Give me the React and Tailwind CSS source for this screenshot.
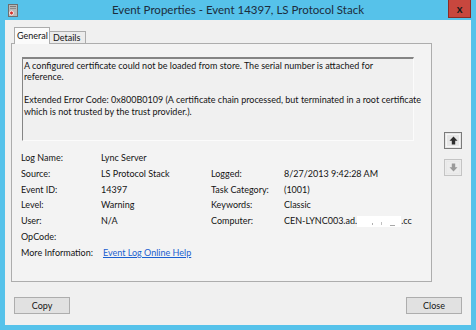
import React from 'react';

const font = { fontFamily: 'Lato, "Noto Sans", sans-serif' };

// small gray event-viewer document icon with a red mark
const WindowIcon = () => (
  <svg width="10" height="13" viewBox="0 0 10 13">
    <rect x="0.5" y="0.5" width="9" height="12" fill="#b8b8b8" stroke="#6e6e6e" />
    <rect x="2" y="2" width="6" height="1" fill="#7a7a7a" />
    <rect x="2" y="4" width="6" height="1" fill="#8a8a8a" />
    <circle cx="3.5" cy="9" r="2" fill="#d6312b" stroke="#fff" strokeWidth="0.8" />
  </svg>
);

const ArrowButton = ({ dir, disabled }) => (
  <div
    className={`w-[18px] h-[17px] border flex items-center justify-center ${
      disabled ? 'border-[#c4c4c4] bg-[#ececec]' : 'border-[#7a7a7a] bg-[#e6e6e6]'
    }`}
  >
    <div className={`w-[14px] h-[13px] border flex items-center justify-center ${disabled ? 'border-[#e8e8e8]' : 'border-[#f6f6f6]'}`}>
      <svg width="9" height="9" viewBox="0 0 9 9">
        <path
          d={dir === 'up' ? 'M4.5 0.5 L8.5 4.8 L6.2 4.8 L6.2 8.5 L2.8 8.5 L2.8 4.8 L0.5 4.8 Z' : 'M4.5 8.5 L8.5 4.2 L6.2 4.2 L6.2 0.5 L2.8 0.5 L2.8 4.2 L0.5 4.2 Z'}
          fill={disabled ? '#9a9a9a' : '#2d2d2d'}
        />
      </svg>
    </div>
  </div>
);

const fields = [
  ['Log Name:', 'Lync Server', '', ''],
  ['Source:', 'LS Protocol Stack', 'Logged:', '8/27/2013 9:42:28 AM'],
  ['Event ID:', '14397', 'Task Category:', '(1001)'],
  ['Level:', 'Warning', 'Keywords:', 'Classic'],
  ['User:', 'N/A', 'Computer:', 'computer'],
  ['OpCode:', '', '', ''],
];

export default function App() {
  return (
    <div className="w-[476px] h-[330px] bg-[#56c2ea] flex flex-col overflow-hidden" style={font}>
      {/* title bar */}
      <div className="h-[20px] shrink-0 grid grid-cols-[40px_1fr_40px] items-start">
        <div className="pl-[8px] pt-[4px]">
          <WindowIcon />
        </div>
        <div className="text-center text-[11.5px] leading-[20px] text-[#1c2c3c] whitespace-nowrap">
          Event Properties - Event 14397, LS Protocol Stack
        </div>
        <div className="flex justify-end pr-[5px]">
          <div className="w-[23px] h-[18px] bg-[#c8473e] border border-t-0 border-[#8b2c25] flex items-center justify-center text-[11px] font-bold text-[#1a1a1a] leading-none">
            x
          </div>
        </div>
      </div>

      {/* client area */}
      <div className="flex-1 mx-[5px] mb-[5px] bg-[#f0f0f0] pl-[6px] pr-[9px] pt-[7px] text-[9px] text-[#141414]">
        <div className="flex items-start">
          <div className="w-[421px] flex flex-col">
            {/* tabs */}
            <div className="h-[16px] flex items-end pl-[3px]">
              <div className="relative z-10 -mb-px w-[36px] h-[17px] bg-[#fbfbfb] border border-b-0 border-[#acacac] pl-[2px] leading-[15px]">
                General
              </div>
              <div className="w-[36px] h-[12px] bg-[#ececec] border border-l-0 border-b-0 border-[#acacac] pl-[3px] leading-[12px]">
                Details
              </div>
            </div>

            {/* panel */}
            <div className="h-[239px] border border-[#adadad] bg-[#f3f3f3] pl-[9px] pt-[13px]">
              <div className="ml-[1px] w-[392px] h-[84px] border-t-2 border-l border-[#858585] border-r border-b border-r-[#fbfbfb] border-b-[#fbfbfb] bg-[#f0f0f0] pl-[1px] pt-[0.5px] leading-[11.5px]">
                <div className="whitespace-nowrap">A configured certificate could not be loaded from store. The serial number is attached for</div>
                <div>reference.</div>
                <div className="h-[11.5px]" />
                <div className="whitespace-nowrap">Extended Error Code: 0x800B0109 (A certificate chain processed, but terminated in a root certificate</div>
                <div>which is not trusted by the trust provider.).</div>
              </div>

              <div className="mt-[9px] grid grid-cols-[80px_110px_73px_1fr] leading-[15.8px]">
                {fields.map(([l1, v1, l2, v2]) => (
                  <React.Fragment key={l1}>
                    <div>{l1}</div>
                    <div>{v1}</div>
                    <div>{l2}</div>
                    <div className="whitespace-nowrap">
                      {v2 === 'computer' ? (
                        <span className="inline-flex items-center">
                          CEN-LYNC003.ad.
                          <span className="relative inline-block w-[44px] h-[11px] bg-white">
                            <span className="absolute left-[15px] top-[7px] w-[1px] h-[2px] bg-[#b0b0b0]" />
                            <span className="absolute left-[24px] top-[6px] w-[1px] h-[3px] bg-[#c0c0c0]" />
                            <span className="absolute left-[33px] top-[9px] w-[5px] h-[1px] bg-[#a8a8a8]" />
                          </span>
                          .cc
                        </span>
                      ) : (
                        v2
                      )}
                    </div>
                  </React.Fragment>
                ))}
                <div className="whitespace-nowrap">More Information:</div>
                <div className="col-span-3">
                  <span className="ml-[2px] text-[#1a5fd0] underline underline-offset-1">Event Log Online Help</span>
                </div>
              </div>
            </div>
          </div>

          {/* navigation arrows */}
          <div className="ml-[12px] pt-[105px] flex flex-col gap-[10px]">
            <ArrowButton dir="up" />
            <ArrowButton dir="down" disabled />
          </div>
        </div>

        {/* bottom buttons */}
        <div className="mt-[15px] flex justify-between pl-[3px]">
          <div className="w-[56px] h-[17px] bg-[#e1e1e1] border border-[#adadad] flex items-center justify-center">Copy</div>
          <div className="w-[56px] h-[17px] bg-[#e1e1e1] border border-[#adadad] flex items-center justify-center">Close</div>
        </div>
      </div>
    </div>
  );
}
